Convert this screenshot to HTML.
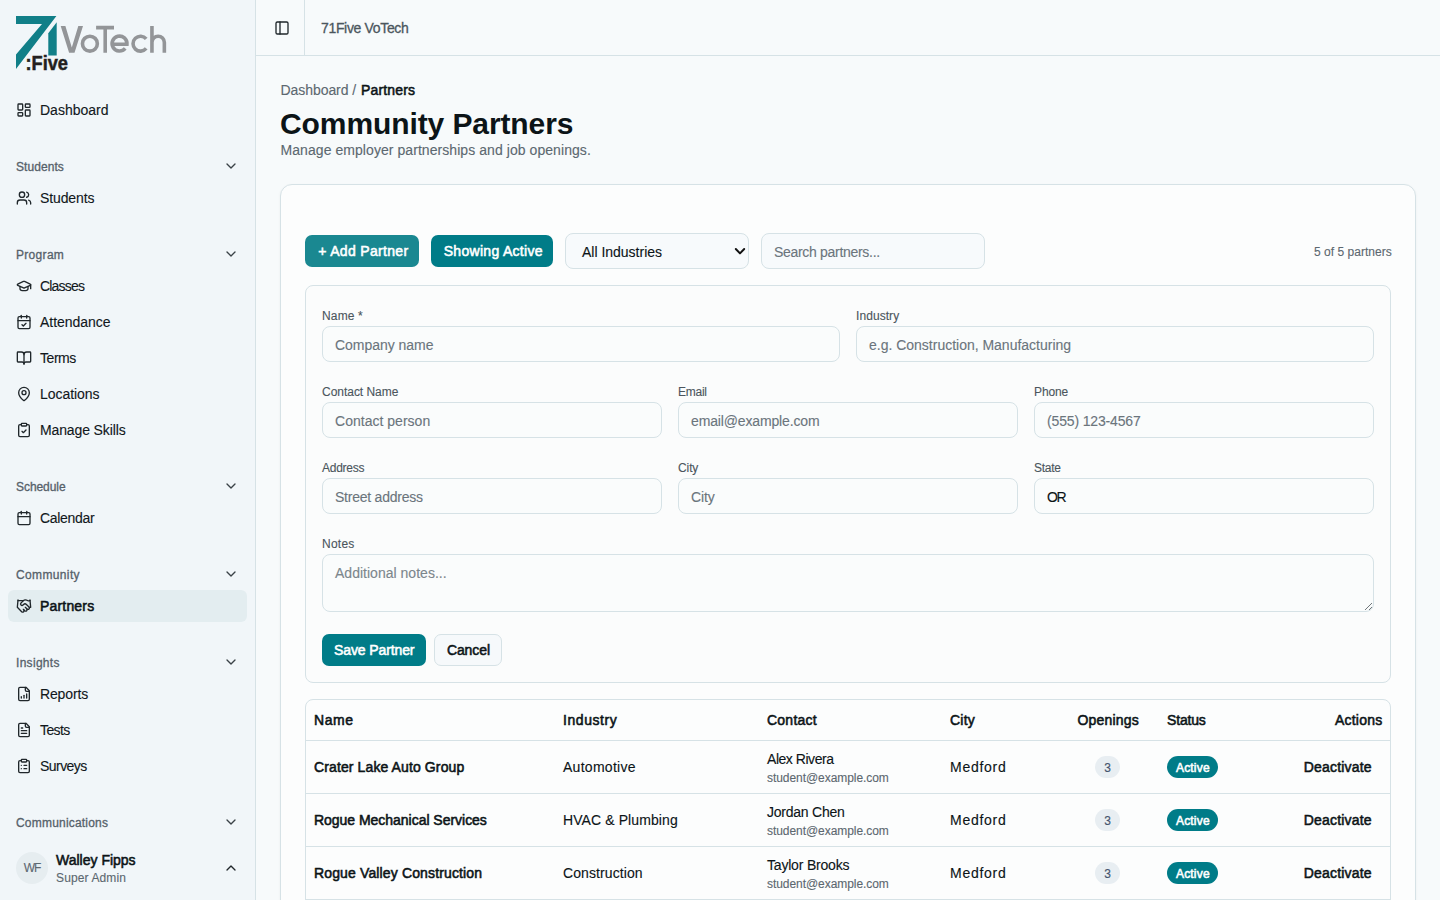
<!DOCTYPE html>
<html><head><meta charset="utf-8"><title>Community Partners</title>
<style>
*{box-sizing:border-box;margin:0;padding:0}
html,body{width:1440px;height:900px;overflow:hidden}
body{font-family:"Liberation Sans",sans-serif;background:#f7fafb;color:#0c1417;position:relative}
.abs{position:absolute}
.t{position:absolute;white-space:nowrap}
</style></head><body>
<div class="abs" style="left:0px;top:0px;width:256px;height:900px;background:#f1f6f9;border-right:1px solid #d6e2e6"></div>
<svg class="abs" style="left:0;top:0" width="256" height="80" viewBox="0 0 256 80"><polygon points="16,16 56.4,16 16,69 16,54.4 42,24 16,24" fill="#117f88"/><polygon points="56.7,22.2 56.7,55.6 48.3,55.6 48.3,33.2" fill="#117f88"/><text x="25.5" y="69.6" font-family="Liberation Sans" font-weight="700" font-size="20.5" fill="#231f20" stroke="#231f20" stroke-width="0.5" textLength="42.5" lengthAdjust="spacingAndGlyphs">:Five</text><g fill="none" stroke="#939598" stroke-width="3.6"><polygon points="60.7,25.9 65.4,25.9 71.8,47.6 78.3,25.9 83,25.9 74.5,52.7 69.1,52.7" fill="#939598" stroke="none"/><circle cx="89.9" cy="43.65" r="7.45"/><path d="M96.1 27.6H114M105.2 25.9V52.7"/><path d="M112 44.2H126.95A7.45 7.45 0 1 0 125.2 48.4"/><path d="M146.2 38.86A7.45 7.45 0 1 0 146.2 48.44"/><path d="M151.95 25.9V52.7M151.95 42.4A6.2 6.2 0 0 1 164.35 42.4V52.7"/></g></svg>
<div class="abs" style="left:8px;top:590px;width:239px;height:32px;background:#e3edf0;border-radius:6px"></div>
<svg class="abs" style="left:16px;top:102px" width="16" height="16" viewBox="0 0 24 24" fill="none" stroke="#20272b" stroke-width="2" stroke-linecap="round" stroke-linejoin="round"><rect width="7" height="9" x="3" y="3" rx="1"/><rect width="7" height="5" x="14" y="3" rx="1"/><rect width="7" height="9" x="14" y="12" rx="1"/><rect width="7" height="5" x="3" y="16" rx="1"/></svg>
<div class="t" style="top:99.60px;font-size:14px;line-height:21px;-webkit-text-stroke:0.12px #11181c;color:#11181c;letter-spacing:0.012px;left:40.0px;">Dashboard</div>
<div class="t" style="top:157.80px;font-size:12px;line-height:18px;-webkit-text-stroke:0.3px #56616a;color:#56616a;letter-spacing:0.071px;left:16.0px;">Students</div>
<svg class="abs" style="left:223px;top:158px" width="16" height="16" viewBox="0 0 24 24" fill="none" stroke="#3a4247" stroke-width="2" stroke-linecap="round" stroke-linejoin="round"><path d="m6 9 6 6 6-6"/></svg>
<svg class="abs" style="left:16px;top:190px" width="16" height="16" viewBox="0 0 24 24" fill="none" stroke="#20272b" stroke-width="2" stroke-linecap="round" stroke-linejoin="round"><path d="M16 21v-2a4 4 0 0 0-4-4H6a4 4 0 0 0-4 4v2"/><circle cx="9" cy="7" r="4"/><path d="M22 21v-2a4 4 0 0 0-3-3.87"/><path d="M16 3.13a4 4 0 0 1 0 7.75"/></svg>
<div class="t" style="top:187.60px;font-size:14px;line-height:21px;-webkit-text-stroke:0.12px #11181c;color:#11181c;letter-spacing:-0.118px;left:40.0px;">Students</div>
<div class="t" style="top:245.80px;font-size:12px;line-height:18px;-webkit-text-stroke:0.3px #56616a;color:#56616a;letter-spacing:0.308px;left:16.0px;">Program</div>
<svg class="abs" style="left:223px;top:246px" width="16" height="16" viewBox="0 0 24 24" fill="none" stroke="#3a4247" stroke-width="2" stroke-linecap="round" stroke-linejoin="round"><path d="m6 9 6 6 6-6"/></svg>
<svg class="abs" style="left:16px;top:278px" width="16" height="16" viewBox="0 0 24 24" fill="none" stroke="#20272b" stroke-width="2" stroke-linecap="round" stroke-linejoin="round"><path d="M21.42 10.922a1 1 0 0 0-.019-1.838L12.83 5.18a2 2 0 0 0-1.66 0L2.6 9.08a1 1 0 0 0 0 1.832l8.57 3.908a2 2 0 0 0 1.66 0z"/><path d="M22 10v6"/><path d="M6 12.5V16a6 3 0 0 0 12 0v-3.5"/></svg>
<div class="t" style="top:275.60px;font-size:14px;line-height:21px;-webkit-text-stroke:0.12px #11181c;color:#11181c;letter-spacing:-0.8px;left:40.0px;">Classes</div>
<svg class="abs" style="left:16px;top:314px" width="16" height="16" viewBox="0 0 24 24" fill="none" stroke="#20272b" stroke-width="2" stroke-linecap="round" stroke-linejoin="round"><path d="M8 2v4"/><path d="M16 2v4"/><rect width="18" height="18" x="3" y="4" rx="2"/><path d="M3 10h18"/><path d="m9 16 2 2 4-4"/></svg>
<div class="t" style="top:311.60px;font-size:14px;line-height:21px;-webkit-text-stroke:0.12px #11181c;color:#11181c;letter-spacing:-0.025px;left:40.0px;">Attendance</div>
<svg class="abs" style="left:16px;top:350px" width="16" height="16" viewBox="0 0 24 24" fill="none" stroke="#20272b" stroke-width="2" stroke-linecap="round" stroke-linejoin="round"><path d="M12 7v14"/><path d="M3 18a1 1 0 0 1-1-1V4a1 1 0 0 1 1-1h5a4 4 0 0 1 4 4 4 4 0 0 1 4-4h5a1 1 0 0 1 1 1v13a1 1 0 0 1-1 1h-6a3 3 0 0 0-3 3 3 3 0 0 0-3-3z"/></svg>
<div class="t" style="top:347.60px;font-size:14px;line-height:21px;-webkit-text-stroke:0.12px #11181c;color:#11181c;letter-spacing:-0.444px;left:40.0px;">Terms</div>
<svg class="abs" style="left:16px;top:386px" width="16" height="16" viewBox="0 0 24 24" fill="none" stroke="#20272b" stroke-width="2" stroke-linecap="round" stroke-linejoin="round"><path d="M20 10c0 4.993-5.539 10.193-7.399 11.799a1 1 0 0 1-1.202 0C9.539 20.193 4 14.993 4 10a8 8 0 0 1 16 0"/><circle cx="12" cy="10" r="3"/></svg>
<div class="t" style="top:383.60px;font-size:14px;line-height:21px;-webkit-text-stroke:0.12px #11181c;color:#11181c;letter-spacing:-0.047px;left:40.0px;">Locations</div>
<svg class="abs" style="left:16px;top:422px" width="16" height="16" viewBox="0 0 24 24" fill="none" stroke="#20272b" stroke-width="2" stroke-linecap="round" stroke-linejoin="round"><rect width="8" height="4" x="8" y="2" rx="1" ry="1"/><path d="M16 4h2a2 2 0 0 1 2 2v14a2 2 0 0 1-2 2H6a2 2 0 0 1-2-2V6a2 2 0 0 1 2-2h2"/><path d="m9 14 2 2 4-4"/></svg>
<div class="t" style="top:419.60px;font-size:14px;line-height:21px;-webkit-text-stroke:0.12px #11181c;color:#11181c;letter-spacing:-0.125px;left:40.0px;">Manage Skills</div>
<div class="t" style="top:477.80px;font-size:12px;line-height:18px;-webkit-text-stroke:0.3px #56616a;color:#56616a;letter-spacing:-0.057px;left:16.0px;">Schedule</div>
<svg class="abs" style="left:223px;top:478px" width="16" height="16" viewBox="0 0 24 24" fill="none" stroke="#3a4247" stroke-width="2" stroke-linecap="round" stroke-linejoin="round"><path d="m6 9 6 6 6-6"/></svg>
<svg class="abs" style="left:16px;top:510px" width="16" height="16" viewBox="0 0 24 24" fill="none" stroke="#20272b" stroke-width="2" stroke-linecap="round" stroke-linejoin="round"><path d="M8 2v4"/><path d="M16 2v4"/><rect width="18" height="18" x="3" y="4" rx="2"/><path d="M3 10h18"/></svg>
<div class="t" style="top:507.60px;font-size:14px;line-height:21px;-webkit-text-stroke:0.12px #11181c;color:#11181c;letter-spacing:-0.311px;left:40.0px;">Calendar</div>
<div class="t" style="top:565.80px;font-size:12px;line-height:18px;-webkit-text-stroke:0.3px #56616a;color:#56616a;letter-spacing:0.362px;left:16.0px;">Community</div>
<svg class="abs" style="left:223px;top:566px" width="16" height="16" viewBox="0 0 24 24" fill="none" stroke="#3a4247" stroke-width="2" stroke-linecap="round" stroke-linejoin="round"><path d="m6 9 6 6 6-6"/></svg>
<svg class="abs" style="left:16px;top:598px" width="16" height="16" viewBox="0 0 24 24" fill="none" stroke="#20272b" stroke-width="2" stroke-linecap="round" stroke-linejoin="round"><path d="m11 17 2 2a1 1 0 1 0 3-3"/><path d="m14 14 2.5 2.5a1 1 0 1 0 3-3l-3.88-3.88a3 3 0 0 0-4.24 0l-.88.88a1 1 0 1 1-3-3l2.81-2.81a5.79 5.79 0 0 1 7.06-.87l.47.28a2 2 0 0 0 1.42.25L21 4"/><path d="m21 3 1 11h-2"/><path d="M3 3 2 14l6.5 6.5a1 1 0 1 0 3-3"/><path d="M3 4h8"/></svg>
<div class="t" style="top:595.60px;font-size:14px;line-height:21px;-webkit-text-stroke:0.55px #0c1417;color:#0c1417;letter-spacing:0.179px;left:40.0px;">Partners</div>
<div class="t" style="top:653.80px;font-size:12px;line-height:18px;-webkit-text-stroke:0.3px #56616a;color:#56616a;letter-spacing:0.304px;left:16.0px;">Insights</div>
<svg class="abs" style="left:223px;top:654px" width="16" height="16" viewBox="0 0 24 24" fill="none" stroke="#3a4247" stroke-width="2" stroke-linecap="round" stroke-linejoin="round"><path d="m6 9 6 6 6-6"/></svg>
<svg class="abs" style="left:16px;top:686px" width="16" height="16" viewBox="0 0 24 24" fill="none" stroke="#20272b" stroke-width="2" stroke-linecap="round" stroke-linejoin="round"><path d="M15 2H6a2 2 0 0 0-2 2v16a2 2 0 0 0 2 2h12a2 2 0 0 0 2-2V7Z"/><path d="M14 2v4a2 2 0 0 0 2 2h4"/><path d="M8 18v-2"/><path d="M12 18v-4"/><path d="M16 18v-6"/></svg>
<div class="t" style="top:683.60px;font-size:14px;line-height:21px;-webkit-text-stroke:0.12px #11181c;color:#11181c;letter-spacing:-0.146px;left:40.0px;">Reports</div>
<svg class="abs" style="left:16px;top:722px" width="16" height="16" viewBox="0 0 24 24" fill="none" stroke="#20272b" stroke-width="2" stroke-linecap="round" stroke-linejoin="round"><path d="M15 2H6a2 2 0 0 0-2 2v16a2 2 0 0 0 2 2h12a2 2 0 0 0 2-2V7Z"/><path d="M14 2v4a2 2 0 0 0 2 2h4"/><path d="M10 9H8"/><path d="M16 13H8"/><path d="M16 17H8"/></svg>
<div class="t" style="top:719.60px;font-size:14px;line-height:21px;-webkit-text-stroke:0.12px #11181c;color:#11181c;letter-spacing:-0.619px;left:40.0px;">Tests</div>
<svg class="abs" style="left:16px;top:758px" width="16" height="16" viewBox="0 0 24 24" fill="none" stroke="#20272b" stroke-width="2" stroke-linecap="round" stroke-linejoin="round"><rect width="8" height="4" x="8" y="2" rx="1" ry="1"/><path d="M16 4h2a2 2 0 0 1 2 2v14a2 2 0 0 1-2 2H6a2 2 0 0 1-2-2V6a2 2 0 0 1 2-2h2"/><path d="M12 11h4"/><path d="M12 16h4"/><path d="M8 11h.01"/><path d="M8 16h.01"/></svg>
<div class="t" style="top:755.60px;font-size:14px;line-height:21px;-webkit-text-stroke:0.12px #11181c;color:#11181c;letter-spacing:-0.55px;left:40.0px;">Surveys</div>
<div class="t" style="top:813.80px;font-size:12px;line-height:18px;-webkit-text-stroke:0.3px #56616a;color:#56616a;letter-spacing:0.202px;left:16.0px;">Communications</div>
<svg class="abs" style="left:223px;top:814px" width="16" height="16" viewBox="0 0 24 24" fill="none" stroke="#3a4247" stroke-width="2" stroke-linecap="round" stroke-linejoin="round"><path d="m6 9 6 6 6-6"/></svg>
<div class="abs" style="left:16px;top:852px;width:32px;height:32px;background:#e6edf0;border-radius:50%"></div>
<div class="t" style="top:859.30px;font-size:12px;line-height:18px;-webkit-text-stroke:0.12px #5c6870;color:#5c6870;letter-spacing:-1.15px;left:-268.0px;width:600px;text-align:center;">WF</div>
<div class="t" style="top:849.60px;font-size:14px;line-height:21px;-webkit-text-stroke:0.55px #0c1417;color:#0c1417;letter-spacing:0.0px;left:56.0px;">Walley Fipps</div>
<div class="t" style="top:869.20px;font-size:12px;line-height:18px;-webkit-text-stroke:0.12px #5c6870;color:#5c6870;letter-spacing:0.122px;left:56.0px;">Super Admin</div>
<svg class="abs" style="left:223px;top:860px" width="16" height="16" viewBox="0 0 24 24" fill="none" stroke="#20272b" stroke-width="2" stroke-linecap="round" stroke-linejoin="round"><path d="m18 15-6-6-6 6"/></svg>
<div class="abs" style="left:256px;top:55px;width:1184px;height:1px;background:#d6e2e6"></div>
<div class="abs" style="left:304px;top:0px;width:1px;height:55px;background:#d6e2e6"></div>
<svg class="abs" style="left:274px;top:20px" width="16" height="16" viewBox="0 0 24 24" fill="none" stroke="#20272b" stroke-width="2" stroke-linecap="round" stroke-linejoin="round"><rect width="18" height="18" x="3" y="3" rx="2"/><path d="M9 3v18"/></svg>
<div class="t" style="top:17.60px;font-size:14px;line-height:21px;-webkit-text-stroke:0.3px #4b565d;color:#4b565d;letter-spacing:-0.335px;left:321.0px;">71Five VoTech</div>
<div class="t" style="top:79.60px;font-size:14px;line-height:21px;-webkit-text-stroke:0.12px #5c6870;color:#5c6870;letter-spacing:-0.062px;left:280.5px;">Dashboard /</div>
<div class="t" style="top:79.60px;font-size:14px;line-height:21px;-webkit-text-stroke:0.55px #0c1417;color:#0c1417;letter-spacing:0.15px;left:361.0px;">Partners</div>
<div class="t" style="top:100.70px;font-size:30px;line-height:45px;font-weight:700;color:#0c1417;letter-spacing:-0.096px;left:280.0px;">Community Partners</div>
<div class="t" style="top:140.10px;font-size:14px;line-height:21px;-webkit-text-stroke:0.12px #5c6870;color:#5c6870;letter-spacing:0.064px;left:280.5px;">Manage employer partnerships and job openings.</div>
<div class="abs" style="left:280px;top:184px;width:1136px;height:760px;background:#fcfdfd;border:1px solid #d6e2e6;border-radius:12px;box-shadow:0 1px 3px rgba(0,0,0,0.05)"></div>
<div class="abs" style="left:305px;top:235px;width:114px;height:32px;background:#1a8891;border-radius:7px"></div>
<div class="t" style="top:240.70px;font-size:14px;line-height:21px;-webkit-text-stroke:0.55px #ffffff;color:#ffffff;letter-spacing:0.312px;left:318.3px;">+ Add Partner</div>
<div class="abs" style="left:431px;top:235px;width:122px;height:32px;background:#007c88;border-radius:7px"></div>
<div class="t" style="top:240.70px;font-size:14px;line-height:21px;-webkit-text-stroke:0.55px #ffffff;color:#ffffff;letter-spacing:0.298px;left:443.7px;">Showing Active</div>
<div class="abs" style="left:565px;top:233px;width:184px;height:36px;background:#f7fafc;border:1px solid #d6e2e6;border-radius:8px"></div>
<div class="t" style="top:241.60px;font-size:14px;line-height:21px;-webkit-text-stroke:0.12px #0c1417;color:#0c1417;letter-spacing:-0.01px;left:582.0px;">All Industries</div>
<svg class="abs" style="left:734px;top:247px" width="12" height="10" viewBox="0 0 12 10"><path d="M1.8 2 6 6.4 10.2 2" fill="none" stroke="#111" stroke-width="2" stroke-linecap="round" stroke-linejoin="round"/></svg>
<div class="abs" style="left:761px;top:233px;width:224px;height:36px;background:#f7fafc;border:1px solid #d6e2e6;border-radius:8px"></div>
<div class="t" style="top:241.60px;font-size:14px;line-height:21px;-webkit-text-stroke:0.12px #6b757c;color:#6b757c;letter-spacing:-0.304px;left:774.0px;">Search partners...</div>
<div class="t" style="top:242.60px;font-size:12px;line-height:18px;-webkit-text-stroke:0.12px #5c6870;color:#5c6870;letter-spacing:0.021px;left:1314.0px;">5 of 5 partners</div>
<div class="abs" style="left:305px;top:285px;width:1086px;height:398px;border:1px solid #d6e2e6;border-radius:8px;background:#fbfcfc"></div>
<div class="t" style="top:306.55px;font-size:12px;line-height:18px;-webkit-text-stroke:0.12px #4b565d;color:#4b565d;letter-spacing:0.145px;left:322.0px;">Name *</div>
<div class="abs" style="left:322px;top:326px;width:518px;height:36px;background:#fafcfc;border:1px solid #d6e2e6;border-radius:8px"></div>
<div class="t" style="top:334.60px;font-size:14px;line-height:21px;-webkit-text-stroke:0.12px #6b757c;color:#6b757c;letter-spacing:-0.034px;left:335.0px;">Company name</div>
<div class="t" style="top:306.55px;font-size:12px;line-height:18px;-webkit-text-stroke:0.12px #4b565d;color:#4b565d;letter-spacing:0.071px;left:856.0px;">Industry</div>
<div class="abs" style="left:856px;top:326px;width:518px;height:36px;background:#fafcfc;border:1px solid #d6e2e6;border-radius:8px"></div>
<div class="t" style="top:334.60px;font-size:14px;line-height:21px;-webkit-text-stroke:0.12px #6b757c;color:#6b757c;letter-spacing:-0.009px;left:869.0px;">e.g. Construction, Manufacturing</div>
<div class="t" style="top:382.55px;font-size:12px;line-height:18px;-webkit-text-stroke:0.12px #4b565d;color:#4b565d;letter-spacing:-0.027px;left:322.0px;">Contact Name</div>
<div class="abs" style="left:322px;top:402px;width:340px;height:36px;background:#fafcfc;border:1px solid #d6e2e6;border-radius:8px"></div>
<div class="t" style="top:410.60px;font-size:14px;line-height:21px;-webkit-text-stroke:0.12px #6b757c;color:#6b757c;letter-spacing:0.019px;left:335.0px;">Contact person</div>
<div class="t" style="top:382.55px;font-size:12px;line-height:18px;-webkit-text-stroke:0.12px #4b565d;color:#4b565d;letter-spacing:-0.263px;left:678.0px;">Email</div>
<div class="abs" style="left:678px;top:402px;width:340px;height:36px;background:#fafcfc;border:1px solid #d6e2e6;border-radius:8px"></div>
<div class="t" style="top:410.60px;font-size:14px;line-height:21px;-webkit-text-stroke:0.12px #6b757c;color:#6b757c;letter-spacing:-0.148px;left:691.0px;">email@example.com</div>
<div class="t" style="top:382.55px;font-size:12px;line-height:18px;-webkit-text-stroke:0.12px #4b565d;color:#4b565d;letter-spacing:-0.106px;left:1034.0px;">Phone</div>
<div class="abs" style="left:1034px;top:402px;width:340px;height:36px;background:#fafcfc;border:1px solid #d6e2e6;border-radius:8px"></div>
<div class="t" style="top:410.60px;font-size:14px;line-height:21px;-webkit-text-stroke:0.12px #6b757c;color:#6b757c;letter-spacing:-0.15px;left:1047.0px;">(555) 123-4567</div>
<div class="t" style="top:458.55px;font-size:12px;line-height:18px;-webkit-text-stroke:0.12px #4b565d;color:#4b565d;letter-spacing:-0.271px;left:322.0px;">Address</div>
<div class="abs" style="left:322px;top:478px;width:340px;height:36px;background:#fafcfc;border:1px solid #d6e2e6;border-radius:8px"></div>
<div class="t" style="top:486.60px;font-size:14px;line-height:21px;-webkit-text-stroke:0.12px #6b757c;color:#6b757c;letter-spacing:-0.237px;left:335.0px;">Street address</div>
<div class="t" style="top:458.55px;font-size:12px;line-height:18px;-webkit-text-stroke:0.12px #4b565d;color:#4b565d;letter-spacing:-0.1px;left:678.0px;">City</div>
<div class="abs" style="left:678px;top:478px;width:340px;height:36px;background:#fafcfc;border:1px solid #d6e2e6;border-radius:8px"></div>
<div class="t" style="top:486.60px;font-size:14px;line-height:21px;-webkit-text-stroke:0.12px #6b757c;color:#6b757c;letter-spacing:-0.092px;left:691.0px;">City</div>
<div class="t" style="top:458.55px;font-size:12px;line-height:18px;-webkit-text-stroke:0.12px #4b565d;color:#4b565d;letter-spacing:-0.25px;left:1034.0px;">State</div>
<div class="abs" style="left:1034px;top:478px;width:340px;height:36px;background:#fafcfc;border:1px solid #d6e2e6;border-radius:8px"></div>
<div class="t" style="top:486.60px;font-size:14px;line-height:21px;-webkit-text-stroke:0.12px #0c1417;color:#0c1417;letter-spacing:-1.325px;left:1047.0px;">OR</div>
<div class="t" style="top:534.80px;font-size:12px;line-height:18px;-webkit-text-stroke:0.12px #4b565d;color:#4b565d;letter-spacing:0.25px;left:322.0px;">Notes</div>
<div class="abs" style="left:322px;top:554px;width:1052px;height:58px;background:#fafcfc;border:1px solid #d6e2e6;border-radius:8px"></div>
<div class="t" style="top:562.80px;font-size:14px;line-height:21px;-webkit-text-stroke:0.12px #7c868c;color:#7c868c;letter-spacing:0.017px;left:335.0px;">Additional notes...</div>
<svg class="abs" style="left:1363px;top:601px" width="10" height="10" viewBox="0 0 10 10"><path d="M2.3 8.7 8.7 2.3M6.3 8.7 8.7 6.3" stroke="#6f767a" stroke-width="1" stroke-linecap="round"/></svg>
<div class="abs" style="left:322px;top:634px;width:104px;height:32px;background:#007c88;border-radius:7px"></div>
<div class="t" style="top:639.60px;font-size:14px;line-height:21px;-webkit-text-stroke:0.55px #ffffff;color:#ffffff;letter-spacing:-0.107px;left:334.0px;">Save Partner</div>
<div class="abs" style="left:434px;top:634px;width:68px;height:32px;background:#f6f9fb;border:1px solid #d6e2e6;border-radius:7px"></div>
<div class="t" style="top:639.60px;font-size:14px;line-height:21px;-webkit-text-stroke:0.55px #0c1417;color:#0c1417;letter-spacing:-0.095px;left:446.9px;">Cancel</div>
<div class="abs" style="left:305px;top:699px;width:1086px;height:260px;border:1px solid #d6e2e6;border-radius:8px;background:#fcfdfd"></div>
<div class="abs" style="left:306px;top:740px;width:1084px;height:1px;background:#d6e2e6"></div>
<div class="abs" style="left:306px;top:793px;width:1084px;height:1px;background:#d6e2e6"></div>
<div class="abs" style="left:306px;top:846px;width:1084px;height:1px;background:#d6e2e6"></div>
<div class="abs" style="left:306px;top:899px;width:1084px;height:1px;background:#d6e2e6"></div>
<div class="t" style="top:709.80px;font-size:14px;line-height:21px;-webkit-text-stroke:0.55px #0c1417;color:#0c1417;letter-spacing:0.533px;left:314.0px;">Name</div>
<div class="t" style="top:709.80px;font-size:14px;line-height:21px;-webkit-text-stroke:0.55px #0c1417;color:#0c1417;letter-spacing:0.557px;left:563.0px;">Industry</div>
<div class="t" style="top:709.80px;font-size:14px;line-height:21px;-webkit-text-stroke:0.55px #0c1417;color:#0c1417;letter-spacing:0.237px;left:767.0px;">Contact</div>
<div class="t" style="top:709.80px;font-size:14px;line-height:21px;-webkit-text-stroke:0.55px #0c1417;color:#0c1417;letter-spacing:0.208px;left:950.0px;">City</div>
<div class="t" style="top:709.80px;font-size:14px;line-height:21px;-webkit-text-stroke:0.55px #0c1417;color:#0c1417;letter-spacing:0.189px;left:1077.5px;">Openings</div>
<div class="t" style="top:709.80px;font-size:14px;line-height:21px;-webkit-text-stroke:0.55px #0c1417;color:#0c1417;letter-spacing:-0.165px;left:1167.0px;">Status</div>
<div class="t" style="top:709.80px;font-size:14px;line-height:21px;-webkit-text-stroke:0.55px #0c1417;color:#0c1417;letter-spacing:0.204px;left:1335.0px;">Actions</div>
<div class="t" style="top:756.60px;font-size:14px;line-height:21px;-webkit-text-stroke:0.55px #0c1417;color:#0c1417;letter-spacing:0.113px;left:314.0px;">Crater Lake Auto Group</div>
<div class="t" style="top:756.60px;font-size:14px;line-height:21px;-webkit-text-stroke:0.12px #0c1417;color:#0c1417;letter-spacing:0.281px;left:563.0px;">Automotive</div>
<div class="t" style="top:749.10px;font-size:14px;line-height:21px;-webkit-text-stroke:0.12px #0c1417;color:#0c1417;letter-spacing:-0.46px;left:767.0px;">Alex Rivera</div>
<div class="t" style="top:769.30px;font-size:12px;line-height:18px;-webkit-text-stroke:0.12px #5c6870;color:#5c6870;letter-spacing:-0.058px;left:767.0px;">student@example.com</div>
<div class="t" style="top:756.60px;font-size:14px;line-height:21px;-webkit-text-stroke:0.12px #0c1417;color:#0c1417;letter-spacing:0.721px;left:950.0px;">Medford</div>
<div class="abs" style="left:1095px;top:756px;width:25px;height:22px;background:#e8eef2;border-radius:11px"></div>
<div class="t" style="top:759.30px;font-size:12px;line-height:18px;-webkit-text-stroke:0.12px #44546e;color:#44546e;left:807.5px;width:600px;text-align:center;">3</div>
<div class="abs" style="left:1167px;top:756px;width:51px;height:22px;background:#007c88;border-radius:11px"></div>
<div class="t" style="top:759.30px;font-size:12px;line-height:18px;-webkit-text-stroke:0.55px #ffffff;color:#ffffff;letter-spacing:0.175px;left:1176.0px;">Active</div>
<div class="t" style="top:756.60px;font-size:14px;line-height:21px;-webkit-text-stroke:0.55px #0c1417;color:#0c1417;letter-spacing:0.192px;left:1303.7px;">Deactivate</div>
<div class="t" style="top:809.60px;font-size:14px;line-height:21px;-webkit-text-stroke:0.55px #0c1417;color:#0c1417;letter-spacing:-0.028px;left:314.0px;">Rogue Mechanical Services</div>
<div class="t" style="top:809.60px;font-size:14px;line-height:21px;-webkit-text-stroke:0.12px #0c1417;color:#0c1417;letter-spacing:0.095px;left:563.0px;">HVAC &amp; Plumbing</div>
<div class="t" style="top:802.10px;font-size:14px;line-height:21px;-webkit-text-stroke:0.12px #0c1417;color:#0c1417;letter-spacing:-0.23px;left:767.0px;">Jordan Chen</div>
<div class="t" style="top:822.30px;font-size:12px;line-height:18px;-webkit-text-stroke:0.12px #5c6870;color:#5c6870;letter-spacing:-0.058px;left:767.0px;">student@example.com</div>
<div class="t" style="top:809.60px;font-size:14px;line-height:21px;-webkit-text-stroke:0.12px #0c1417;color:#0c1417;letter-spacing:0.721px;left:950.0px;">Medford</div>
<div class="abs" style="left:1095px;top:809px;width:25px;height:22px;background:#e8eef2;border-radius:11px"></div>
<div class="t" style="top:812.30px;font-size:12px;line-height:18px;-webkit-text-stroke:0.12px #44546e;color:#44546e;left:807.5px;width:600px;text-align:center;">3</div>
<div class="abs" style="left:1167px;top:809px;width:51px;height:22px;background:#007c88;border-radius:11px"></div>
<div class="t" style="top:812.30px;font-size:12px;line-height:18px;-webkit-text-stroke:0.55px #ffffff;color:#ffffff;letter-spacing:0.175px;left:1176.0px;">Active</div>
<div class="t" style="top:809.60px;font-size:14px;line-height:21px;-webkit-text-stroke:0.55px #0c1417;color:#0c1417;letter-spacing:0.192px;left:1303.7px;">Deactivate</div>
<div class="t" style="top:862.60px;font-size:14px;line-height:21px;-webkit-text-stroke:0.55px #0c1417;color:#0c1417;letter-spacing:0.14px;left:314.0px;">Rogue Valley Construction</div>
<div class="t" style="top:862.60px;font-size:14px;line-height:21px;-webkit-text-stroke:0.12px #0c1417;color:#0c1417;letter-spacing:0.091px;left:563.0px;">Construction</div>
<div class="t" style="top:855.10px;font-size:14px;line-height:21px;-webkit-text-stroke:0.12px #0c1417;color:#0c1417;letter-spacing:-0.194px;left:767.0px;">Taylor Brooks</div>
<div class="t" style="top:875.30px;font-size:12px;line-height:18px;-webkit-text-stroke:0.12px #5c6870;color:#5c6870;letter-spacing:-0.058px;left:767.0px;">student@example.com</div>
<div class="t" style="top:862.60px;font-size:14px;line-height:21px;-webkit-text-stroke:0.12px #0c1417;color:#0c1417;letter-spacing:0.721px;left:950.0px;">Medford</div>
<div class="abs" style="left:1095px;top:862px;width:25px;height:22px;background:#e8eef2;border-radius:11px"></div>
<div class="t" style="top:865.30px;font-size:12px;line-height:18px;-webkit-text-stroke:0.12px #44546e;color:#44546e;left:807.5px;width:600px;text-align:center;">3</div>
<div class="abs" style="left:1167px;top:862px;width:51px;height:22px;background:#007c88;border-radius:11px"></div>
<div class="t" style="top:865.30px;font-size:12px;line-height:18px;-webkit-text-stroke:0.55px #ffffff;color:#ffffff;letter-spacing:0.175px;left:1176.0px;">Active</div>
<div class="t" style="top:862.60px;font-size:14px;line-height:21px;-webkit-text-stroke:0.55px #0c1417;color:#0c1417;letter-spacing:0.192px;left:1303.7px;">Deactivate</div>
</body></html>
